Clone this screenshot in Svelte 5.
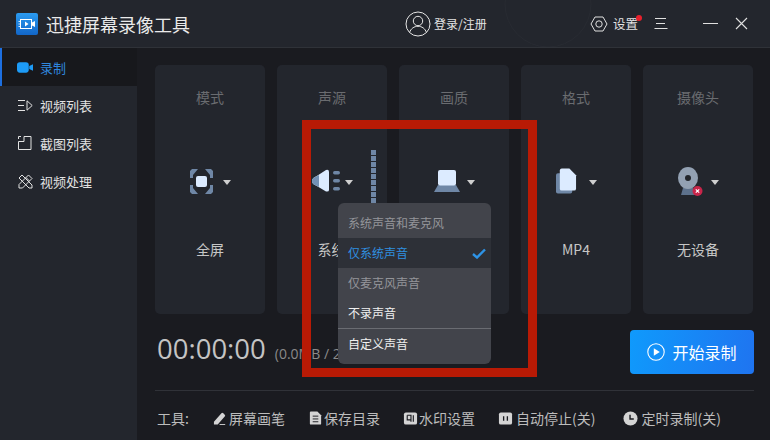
<script>
	const nav = [
		{ label: '录制', icon: 'rec', active: true },
		{ label: '视频列表', icon: 'list' },
		{ label: '截图列表', icon: 'shot' },
		{ label: '视频处理', icon: 'edit' }
	];
	const cards = [
		{ title: '模式', value: '全屏', icon: 'mode' },
		{ title: '声源', value: '系统声音', icon: 'sound', shifted: true },
		{ title: '画质', value: '', icon: 'quality' },
		{ title: '格式', value: 'MP4', icon: 'format' },
		{ title: '摄像头', value: '无设备', icon: 'camera' }
	];
	const options = [
		{ label: '系统声音和麦克风', cls: 'dim tall' },
		{ label: '仅系统声音', cls: 'selected' },
		{ label: '仅麦克风声音', cls: 'dim' },
		{ label: '不录声音', cls: '' },
		{ label: '自定义声音', cls: 'custom' }
	];
	const tools = [
		{ label: '屏幕画笔', icon: 'pen' },
		{ label: '保存目录', icon: 'folder' },
		{ label: '水印设置', icon: 'mark' },
		{ label: '自动停止(关)', icon: 'stop', wide: true },
		{ label: '定时录制(关)', icon: 'clock', wide: true }
	];
</script>

<div class="app">
	<header class="titlebar">
		<svg class="swirl" width="110" height="47" viewBox="0 0 110 47" fill="none" stroke="#282b32">
			<circle cx="58" cy="4" r="43" />
		</svg>
		<div class="brand">
			<svg class="logo" width="22" height="22" viewBox="0 0 22 22">
				<defs>
					<linearGradient id="lg" x1="0" y1="0" x2="0" y2="1">
						<stop offset="0" stop-color="#2b9bf0" />
						<stop offset="1" stop-color="#1266c8" />
					</linearGradient>
				</defs>
				<rect width="22" height="22" rx="2" fill="url(#lg)" />
				<rect x="4.5" y="6.5" width="11" height="9" fill="none" stroke="#fff" stroke-width="1" />
				<path d="M9 8.5l3.5 2.5L9 13.5z" fill="#fff" />
				<path d="M16 9.5l3-1.5v6l-3-1.500z" fill="#fff" />
				<path d="M2.500 8.500h2M2.500 11h2M2.500 13.500h2" stroke="#fff" stroke-width="0.800" />
			</svg>
			<span class="app-name">迅捷屏幕录像工具</span>
		</div>
		<div class="login">
			<svg width="26" height="26" viewBox="0 0 26 26" fill="none" stroke="#e6e6e6" stroke-width="1">
				<circle cx="13" cy="13" r="12" />
				<circle cx="13" cy="10" r="4.700" />
				<path d="M4.500 21.500c1.500-4 4.500-6.200 8.500-6.200s7 2.200 8.500 6.200" />
			</svg>
			<span>登录/注册</span>
		</div>
		<div class="win">
			<div class="settings">
				<svg width="18" height="16" viewBox="0 0 18 16" fill="none" stroke="#e0e0e0" stroke-width="1">
					<path d="M5 1h8l4 7-4 7H5L1 8z" />
					<circle cx="9" cy="8" r="3.200" />
				</svg>
				<span>设置</span>
				<i class="dot"></i>
			</div>
			<svg class="menu" width="14" height="13" viewBox="0 0 14 13" stroke="#e0e0e0" stroke-width="1">
				<path d="M1 1.500h11M2 6.500h9M0.500 11.500h13" />
			</svg>
			<svg class="min" width="15" height="13" viewBox="0 0 15 13" stroke="#e0e0e0" stroke-width="1">
				<path d="M0 6.500h15" />
			</svg>
			<svg class="close" width="13" height="13" viewBox="0 0 13 13" stroke="#e0e0e0" stroke-width="1.100">
				<path d="M1 1l11 11M12 1L1 12" />
			</svg>
		</div>
	</header>

	<div class="body">
		<nav class="sidebar">
			{#each nav as item}
				<div class="nav-item" class:active={item.active}>
					<span class="nav-icon">
						{#if item.icon === 'rec'}
							<svg width="17" height="11" viewBox="0 0 17 11">
								<rect width="12.500" height="11" rx="3" fill="#1d9bf6" />
								<path d="M13 4l4-2v7l-4-2z" fill="#1d9bf6" />
							</svg>
						{:else if item.icon === 'list'}
							<svg width="15" height="11" viewBox="0 0 15 11" fill="none" stroke="#e2e2e2">
								<path d="M0 .5h7M0 5.500h6M0 10.500h7" />
								<path d="M9 .8l5.200 4.700L9 10.200z" />
							</svg>
						{:else if item.icon === 'shot'}
							<svg width="14" height="14" viewBox="0 0 14 14" fill="none" stroke="#e2e2e2">
								<path d="M.5 5.500v8h12.500V.5H6v5H.500M.5 3V.5H3" />
							</svg>
						{:else}
							<svg width="15" height="15" viewBox="0 0 15 15" fill="none" stroke="#e2e2e2">
								<path d="M1 10.500L10.500 1 14 4.500 4.500 14H1z" />
								<path d="M8 3.500l3.500 3.500" />
								<path d="M1 4l3-3 10 10v3h-3z" />
							</svg>
						{/if}
					</span>
					<span>{item.label}</span>
				</div>
			{/each}
		</nav>

		<main class="main">
			<section class="cards">
				{#each cards as card}
					<div class="card">
						<div class="card-title">{card.title}</div>
						<div class="card-icon">
							{#if card.icon === 'mode'}
								<svg width="23" height="25" viewBox="0 0 23 25">
									<path d="M0 2l2-2h6L3 6v3H0zM23 2l-2-2h-6l5 6v3h3zM0 23l2 2h6l-5-6v-3H0zM23 23l-2 2h-6l5-6v-3h3z" fill="#6f87a6" />
									<rect x="6" y="7" width="11" height="11" rx="2" fill="#dcebff" />
								</svg>
							{:else if card.icon === 'sound'}
								<svg width="28" height="24" viewBox="0 0 28 24">
									<path d="M0 12q0-3 4-4.500L14 1q3-1 3 2v18q0 2-3 1.500L4 16.500Q0 15 0 12z" fill="#dcebff" />
									<path d="M0 12q0-3 4-4.500L7 6v12l-3-1.500Q0 15 0 12z" fill="#7391b5" />
									<rect x="21" y="2" width="7" height="3.500" rx="1.700" fill="#6f87a6" />
									<rect x="21" y="10" width="7" height="3.500" rx="1.700" fill="#6f87a6" />
									<rect x="21" y="18" width="7" height="3.500" rx="1.700" fill="#6f87a6" />
								</svg>
							{:else if card.icon === 'quality'}
								<svg width="26" height="22" viewBox="0 0 26 22">
									<path d="M4 15h18l4 7H0z" fill="#6f87a6" />
									<rect x="4" y="0" width="18" height="15.500" rx="2" fill="#dcebff" />
								</svg>
							{:else if card.icon === 'format'}
								<svg width="21" height="26" viewBox="0 0 22 26">
									<rect x="0" y="5" width="17" height="21" rx="2" fill="#6f87a6" />
									<path d="M4 2q0-2 2-2h8l7 7v14q0 2-2 2H6q-2 0-2-2z" fill="#dcebff" />
								</svg>
							{:else}
								<svg width="25" height="29" viewBox="0 0 25 29">
									<path d="M5 21h10l2 7H3z" fill="#5d718c" />
									<ellipse cx="10" cy="11" rx="10" ry="11" fill="#93a1b3" />
									<circle cx="10" cy="11" r="3" fill="#22252b" />
									<circle cx="19.500" cy="24" r="5" fill="#c9254a" />
									<path d="M17.800 22.300l3.400 3.400M21.200 22.300l-3.400 3.400" stroke="#fff" stroke-width="1.200" />
								</svg>
							{/if}
							<i class="caret"></i>
						</div>
						<div class="card-value" class:shifted={card.shifted}>{card.value}</div>
					</div>
				{/each}
			</section>

			<section class="status">
				<div class="timer">
					<span class="time">00:00:00</span>
					<span class="size">(0.0MB / 2.0GB)</span>
				</div>
				<button type="button" class="start">
					<svg width="18" height="18" viewBox="0 0 18 18">
						<circle cx="9" cy="9" r="8.200" fill="none" stroke="#fff" stroke-width="1.100" />
						<path d="M6.800 5.200l6 3.800-6 3.800z" fill="#fff" />
					</svg>
					<span>开始录制</span>
				</button>
			</section>

			<footer class="tools">
				<span class="tools-label">工具:</span>
				{#each tools as tool}
					<span class="tool" class:wide={tool.wide}>
						<svg width="15" height="16" viewBox="0 0 16 16" fill="#d4d4d4">
							{#if tool.icon === 'pen'}
								<path d="M1 12l8-9q1-1 2 0l1.500 1.500q1 1 0 2L5 15H1z" />
								<path d="M7 14.500h6v1H7z" />
							{:else if tool.icon === 'folder'}
								<path d="M3 1h7l4 4v9q0 1-1 1H3q-1 0-1-1V2q0-1 1-1z" />
								<path d="M5 6h6M5 9h6M5 12h6" stroke="#1a1b20" stroke-width="1" />
							{:else if tool.icon === 'mark'}
								<rect x="1" y="2" width="14" height="13" rx="2" />
								<path d="M4.500 5h4v7M11 5v7" fill="none" stroke="#1a1b20" stroke-width="1.200" />
								<path d="M4.500 5v5h4" fill="none" stroke="#1a1b20" stroke-width="1.200" />
							{:else if tool.icon === 'stop'}
								<rect x="1" y="2" width="14" height="13" rx="2" />
								<path d="M6 6v5M10 6v5" stroke="#1a1b20" stroke-width="1.400" />
							{:else}
								<circle cx="8" cy="8.500" r="7.500" />
								<path d="M7.500 4.500v4.500h4" fill="none" stroke="#1a1b20" stroke-width="1.500" />
							{/if}
						</svg>
						<span>{tool.label}</span>
					</span>
				{/each}
			</footer>
		</main>
	</div>

	<div class="levels"></div>

	<div class="highlight"></div>

	<ul class="dropdown">
		{#each options as opt}
			<li class={opt.cls}>
				<span>{opt.label}</span>
				{#if opt.cls === 'selected'}
					<svg width="14" height="11" viewBox="0 0 14 11" fill="none" stroke="#2d93e6" stroke-width="2.400">
						<path d="M1 6l4 3.500L13 1.500" />
					</svg>
				{/if}
			</li>
		{/each}
	</ul>
</div>

<style>
	:global(body) {
		margin: 0;
		background: #1a1b20;
	}
	.app {
		position: relative;
		width: 770px;
		height: 440px;
		overflow: hidden;
		display: flex;
		flex-direction: column;
		background: #1a1b20;
		color: #e4e4e4;
		font-family: "Noto Sans CJK SC", "Liberation Sans", sans-serif;
		font-size: 13px;
	}
	.titlebar {
		position: relative;
		height: 48px;
		flex: none;
		display: flex;
		align-items: center;
		background: #23262d;
		border-bottom: 1px solid #2f3238;
		box-sizing: border-box;
		padding-left: 16px;
	}
	.swirl {
		position: absolute;
		left: 490px;
		top: 0;
	}
	.brand {
		position: relative;
		display: flex;
		align-items: center;
		gap: 8px;
		width: 389px;
	}
	.app-name {
		font-size: 18px;
		color: #eaeaea;
	}
	.login {
		position: relative;
		display: flex;
		align-items: center;
		gap: 3px;
		width: 185px;
		font-size: 12px;
	}
	.win {
		position: relative;
		display: flex;
		align-items: center;
	}
	.settings {
		position: relative;
		display: flex;
		align-items: center;
		gap: 5px;
		font-size: 12.500px;
		margin-right: 16px;
	}
	.dot {
		position: absolute;
		right: -4px;
		top: 1px;
		width: 6px;
		height: 6px;
		border-radius: 50%;
		background: #e8202c;
	}
	.menu {
		margin-right: 35px;
	}
	.min {
		margin-right: 17px;
	}
	.body {
		flex: 1;
		display: flex;
		min-height: 0;
	}
	.sidebar {
		width: 137px;
		flex: none;
		background: #23262d;
		border-right: 2px solid #1a1b20;
	}
	.nav-item {
		height: 38px;
		display: flex;
		align-items: center;
		gap: 7px;
		padding-left: 17px;
		font-size: 13px;
		color: #e2e2e2;
		box-sizing: border-box;
	}
	.nav-item.active {
		background: #17181c;
		color: #2f86dc;
		border-left: 2px solid #1d6fe0;
		padding-left: 15px;
	}
	.nav-icon {
		width: 16px;
		display: flex;
		justify-content: center;
	}
	.main {
		flex: 1;
		min-width: 0;
		display: flex;
		flex-direction: column;
		padding: 17px 16px 0 16px;
	}
	.cards {
		display: flex;
		gap: 12px;
		height: 249px;
	}
	.card {
		width: 110px;
		flex: none;
		background: #23262d;
		border-radius: 5px;
		display: flex;
		flex-direction: column;
		align-items: center;
	}
	.card-title {
		margin-top: 23px;
		height: 19px;
		line-height: 19px;
		color: #6a6c70;
		font-size: 14px;
	}
	.card-icon {
		margin-top: 58px;
		width: 41px;
		height: 32px;
		display: flex;
		align-items: center;
		justify-content: space-between;
	}
	.caret {
		width: 0;
		height: 0;
		margin-top: 3px;
		border-left: 4px solid transparent;
		border-right: 4px solid transparent;
		border-top: 5px solid #cfcfcf;
	}
	.card-value {
		margin-top: 42px;
		height: 20px;
		line-height: 20px;
		font-size: 14px;
		color: #c6c6c6;
		white-space: nowrap;
	}
	.card-value.shifted {
		margin-left: 27px;
	}
	.status {
		height: 61px;
		flex: none;
		margin-top: 16px;
		display: flex;
		justify-content: space-between;
		border-bottom: 1px solid #303238;
		box-sizing: border-box;
	}
	.timer {
		display: flex;
		align-items: baseline;
		gap: 9px;
		padding-left: 2px;
		height: 44px;
		line-height: 38px;
	}
	.time {
		font-family: "Open Sans", "Liberation Sans", sans-serif;
		font-size: 27.500px;
		color: #c4c4c4;
	}
	.size {
		font-family: "Open Sans", "Liberation Sans", sans-serif;
		font-size: 14px;
		color: #8a8a8a;
	}
	.start {
		width: 124px;
		height: 44px;
		border: none;
		border-radius: 4px;
		background: linear-gradient(100deg, #0f9afc, #1f74f0);
		color: #fff;
		display: flex;
		align-items: center;
		justify-content: center;
		gap: 7px;
		font-family: inherit;
		font-size: 16px;
		padding: 0;
	}
	.tools {
		flex: 1;
		display: flex;
		align-items: center;
		padding: 4px 0 0 2px;
		font-size: 14px;
		color: #bcbcbc;
	}
	.tools-label {
		width: 56px;
	}
	.tool {
		display: flex;
		align-items: center;
		gap: 1px;
		margin-right: 23px;
		white-space: nowrap;
	}
	.tool.wide {
		gap: 3px;
		margin-right: 28px;
	}
	.levels {
		position: absolute;
		left: 371px;
		top: 150px;
		width: 5px;
		height: 54px;
		background: repeating-linear-gradient(to bottom, #6f87a6 0 5px, transparent 5px 6px);
	}
	.highlight {
		position: absolute;
		left: 302px;
		top: 120px;
		width: 235px;
		height: 257px;
		box-sizing: border-box;
		border: 9px solid #b81a05;
		pointer-events: none;
	}
	.dropdown {
		position: absolute;
		left: 338px;
		top: 203px;
		width: 153px;
		height: 161px;
		margin: 0;
		padding: 0;
		list-style: none;
		background: #42444b;
		border-radius: 6px;
		overflow: hidden;
		font-size: 12px;
		color: #f0f0f0;
	}
	.dropdown li {
		height: 30px;
		display: flex;
		align-items: center;
		justify-content: space-between;
		padding: 0 5px 0 10px;
		box-sizing: border-box;
	}
	.dropdown li span {
		margin-top: -2px;
	}
	.dropdown li.tall {
		height: 35px;
		padding-top: 6px;
	}
	.dropdown li.dim {
		color: #94959a;
	}
	.dropdown li.selected {
		background: #2d3037;
		color: #2f8fe0;
	}
	.dropdown li.custom {
		height: 36px;
		padding-bottom: 4px;
		border-top: 1px solid #6a6c72;
	}
</style>
